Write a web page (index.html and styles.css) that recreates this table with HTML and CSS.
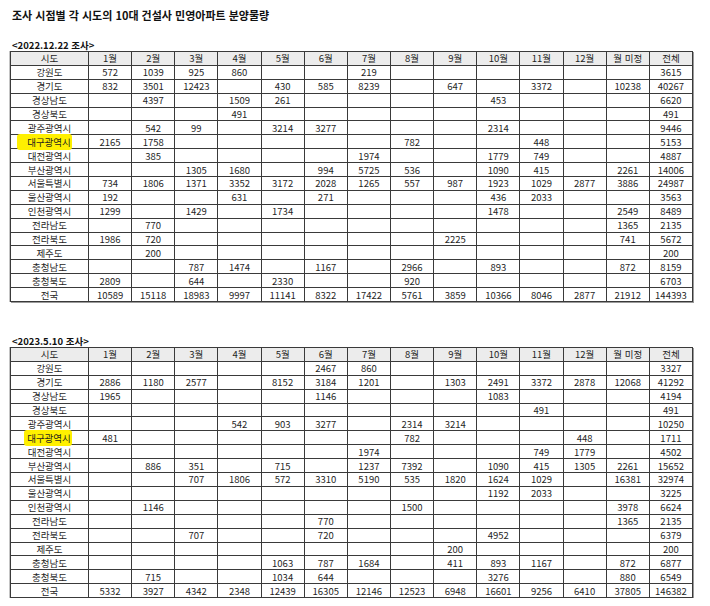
FILE: index.html
```html
<!DOCTYPE html>
<html lang="ko">
<head>
<meta charset="utf-8">
<title>분양물량</title>
<link rel="stylesheet" href="styles.css">
</head>
<body>
<div class="page">
<h1 class="title">조사 시점별 각 시도의 10대 건설사 민영아파트 분양물량</h1>

<p class="caption cap1">&lt;2022.12.22 조사&gt;</p>
<table class="grid">
<colgroup><col class="c-name"><col span="14"></colgroup>
<thead>
<tr><th>시도</th><th>1월</th><th>2월</th><th>3월</th><th>4월</th><th>5월</th><th>6월</th><th>7월</th><th>8월</th><th>9월</th><th>10월</th><th>11월</th><th>12월</th><th>월 미정</th><th>전체</th></tr>
</thead>
<tbody>
<tr><td>강원도</td><td>572</td><td>1039</td><td>925</td><td>860</td><td></td><td></td><td>219</td><td></td><td></td><td></td><td></td><td></td><td></td><td>3615</td></tr>
<tr><td>경기도</td><td>832</td><td>3501</td><td>12423</td><td></td><td>430</td><td>585</td><td>8239</td><td></td><td>647</td><td></td><td>3372</td><td></td><td>10238</td><td>40267</td></tr>
<tr><td>경상남도</td><td></td><td>4397</td><td></td><td>1509</td><td>261</td><td></td><td></td><td></td><td></td><td>453</td><td></td><td></td><td></td><td>6620</td></tr>
<tr><td>경상북도</td><td></td><td></td><td></td><td>491</td><td></td><td></td><td></td><td></td><td></td><td></td><td></td><td></td><td></td><td>491</td></tr>
<tr><td>광주광역시</td><td></td><td>542</td><td>99</td><td></td><td>3214</td><td>3277</td><td></td><td></td><td></td><td>2314</td><td></td><td></td><td></td><td>9446</td></tr>
<tr><td><span class="mark mark1">대구광역시</span></td><td>2165</td><td>1758</td><td></td><td></td><td></td><td></td><td></td><td>782</td><td></td><td></td><td>448</td><td></td><td></td><td>5153</td></tr>
<tr><td>대전광역시</td><td></td><td>385</td><td></td><td></td><td></td><td></td><td>1974</td><td></td><td></td><td>1779</td><td>749</td><td></td><td></td><td>4887</td></tr>
<tr><td>부산광역시</td><td></td><td></td><td>1305</td><td>1680</td><td></td><td>994</td><td>5725</td><td>536</td><td></td><td>1090</td><td>415</td><td></td><td>2261</td><td>14006</td></tr>
<tr><td>서울특별시</td><td>734</td><td>1806</td><td>1371</td><td>3352</td><td>3172</td><td>2028</td><td>1265</td><td>557</td><td>987</td><td>1923</td><td>1029</td><td>2877</td><td>3886</td><td>24987</td></tr>
<tr><td>울산광역시</td><td>192</td><td></td><td></td><td>631</td><td></td><td>271</td><td></td><td></td><td></td><td>436</td><td>2033</td><td></td><td></td><td>3563</td></tr>
<tr><td>인천광역시</td><td>1299</td><td></td><td>1429</td><td></td><td>1734</td><td></td><td></td><td></td><td></td><td>1478</td><td></td><td></td><td>2549</td><td>8489</td></tr>
<tr><td>전라남도</td><td></td><td>770</td><td></td><td></td><td></td><td></td><td></td><td></td><td></td><td></td><td></td><td></td><td>1365</td><td>2135</td></tr>
<tr><td>전라북도</td><td>1986</td><td>720</td><td></td><td></td><td></td><td></td><td></td><td></td><td>2225</td><td></td><td></td><td></td><td>741</td><td>5672</td></tr>
<tr><td>제주도</td><td></td><td>200</td><td></td><td></td><td></td><td></td><td></td><td></td><td></td><td></td><td></td><td></td><td></td><td>200</td></tr>
<tr><td>충청남도</td><td></td><td></td><td>787</td><td>1474</td><td></td><td>1167</td><td></td><td>2966</td><td></td><td>893</td><td></td><td></td><td>872</td><td>8159</td></tr>
<tr><td>충청북도</td><td>2809</td><td></td><td>644</td><td></td><td>2330</td><td></td><td></td><td>920</td><td></td><td></td><td></td><td></td><td></td><td>6703</td></tr>
<tr><td>전국</td><td>10589</td><td>15118</td><td>18983</td><td>9997</td><td>11141</td><td>8322</td><td>17422</td><td>5761</td><td>3859</td><td>10366</td><td>8046</td><td>2877</td><td>21912</td><td>144393</td></tr>
</tbody>
</table>

<p class="caption cap2">&lt;2023.5.10 조사&gt;</p>
<table class="grid">
<colgroup><col class="c-name"><col span="14"></colgroup>
<thead>
<tr><th>시도</th><th>1월</th><th>2월</th><th>3월</th><th>4월</th><th>5월</th><th>6월</th><th>7월</th><th>8월</th><th>9월</th><th>10월</th><th>11월</th><th>12월</th><th>월 미정</th><th>전체</th></tr>
</thead>
<tbody>
<tr><td>강원도</td><td></td><td></td><td></td><td></td><td></td><td>2467</td><td>860</td><td></td><td></td><td></td><td></td><td></td><td></td><td>3327</td></tr>
<tr><td>경기도</td><td>2886</td><td>1180</td><td>2577</td><td></td><td>8152</td><td>3184</td><td>1201</td><td></td><td>1303</td><td>2491</td><td>3372</td><td>2878</td><td>12068</td><td>41292</td></tr>
<tr><td>경상남도</td><td>1965</td><td></td><td></td><td></td><td></td><td>1146</td><td></td><td></td><td></td><td>1083</td><td></td><td></td><td></td><td>4194</td></tr>
<tr><td>경상북도</td><td></td><td></td><td></td><td></td><td></td><td></td><td></td><td></td><td></td><td></td><td>491</td><td></td><td></td><td>491</td></tr>
<tr><td>광주광역시</td><td></td><td></td><td></td><td>542</td><td>903</td><td>3277</td><td></td><td>2314</td><td>3214</td><td></td><td></td><td></td><td></td><td>10250</td></tr>
<tr><td><span class="mark mark2">대구광역시</span></td><td>481</td><td></td><td></td><td></td><td></td><td></td><td></td><td>782</td><td></td><td></td><td></td><td>448</td><td></td><td>1711</td></tr>
<tr><td>대전광역시</td><td></td><td></td><td></td><td></td><td></td><td></td><td>1974</td><td></td><td></td><td></td><td>749</td><td>1779</td><td></td><td>4502</td></tr>
<tr><td>부산광역시</td><td></td><td>886</td><td>351</td><td></td><td>715</td><td></td><td>1237</td><td>7392</td><td></td><td>1090</td><td>415</td><td>1305</td><td>2261</td><td>15652</td></tr>
<tr><td>서울특별시</td><td></td><td></td><td>707</td><td>1806</td><td>572</td><td>3310</td><td>5190</td><td>535</td><td>1820</td><td>1624</td><td>1029</td><td></td><td>16381</td><td>32974</td></tr>
<tr><td>울산광역시</td><td></td><td></td><td></td><td></td><td></td><td></td><td></td><td></td><td></td><td>1192</td><td>2033</td><td></td><td></td><td>3225</td></tr>
<tr><td>인천광역시</td><td></td><td>1146</td><td></td><td></td><td></td><td></td><td></td><td>1500</td><td></td><td></td><td></td><td></td><td>3978</td><td>6624</td></tr>
<tr><td>전라남도</td><td></td><td></td><td></td><td></td><td></td><td>770</td><td></td><td></td><td></td><td></td><td></td><td></td><td>1365</td><td>2135</td></tr>
<tr><td>전라북도</td><td></td><td></td><td>707</td><td></td><td></td><td>720</td><td></td><td></td><td></td><td>4952</td><td></td><td></td><td></td><td>6379</td></tr>
<tr><td>제주도</td><td></td><td></td><td></td><td></td><td></td><td></td><td></td><td></td><td>200</td><td></td><td></td><td></td><td></td><td>200</td></tr>
<tr><td>충청남도</td><td></td><td></td><td></td><td></td><td>1063</td><td>787</td><td>1684</td><td></td><td>411</td><td>893</td><td>1167</td><td></td><td>872</td><td>6877</td></tr>
<tr><td>충청북도</td><td></td><td>715</td><td></td><td></td><td>1034</td><td>644</td><td></td><td></td><td></td><td>3276</td><td></td><td></td><td>880</td><td>6549</td></tr>
<tr><td>전국</td><td>5332</td><td>3927</td><td>4342</td><td>2348</td><td>12439</td><td>16305</td><td>12146</td><td>12523</td><td>6948</td><td>16601</td><td>9256</td><td>6410</td><td>37805</td><td>146382</td></tr>
</tbody>
</table>
</div>
</body>
</html>
```

FILE: styles.css
```css
html, body {
  margin: 0;
  padding: 0;
  background: #ffffff;
}

body {
  font-family: "Noto Sans CJK KR", "Noto Sans", sans-serif;
  color: #1a1a1a;
}

.page {
  padding: 8px 0 0 10px;
}

.title {
  margin: 0 0 0 2px;
  font-size: 11px;
  line-height: 14px;
  font-weight: 700;
  color: #111;
}

.caption {
  margin: 0 0 0 2px;
  font-size: 9.5px;
  line-height: 12px;
  font-weight: 700;
  color: #111;
}

.cap1 {
  margin-top: 17px;
}

.cap2 {
  margin-top: 33px;
}

.grid {
  width: 683px;
  table-layout: fixed;
  border-collapse: collapse;
  border: 1px solid #444;
  box-shadow: 1px 1px 0 #9a9a9a, -1px 0 0 #c4c4c4;
  font-size: 9.5px;
}

.c-name {
  width: 78px;
}

.grid th,
.grid td {
  border: 1px solid #3a3a3a;
  padding: 0;
  height: 12.9px;
  line-height: 12px;
  text-align: center;
  font-weight: 400;
  white-space: nowrap;
  overflow: visible;
  color: #1f1f1f;
}

.grid th {
  background: #ececec;
}

.mark {
  background: #fff000;
  border-radius: 3px;
}

.mark1 {
  padding: 1px 1px 1px 10px;
  margin-left: -10px;
}

.mark2 {
  padding: 1px 1px 1px 3px;
  margin-left: -3px;
}
```
